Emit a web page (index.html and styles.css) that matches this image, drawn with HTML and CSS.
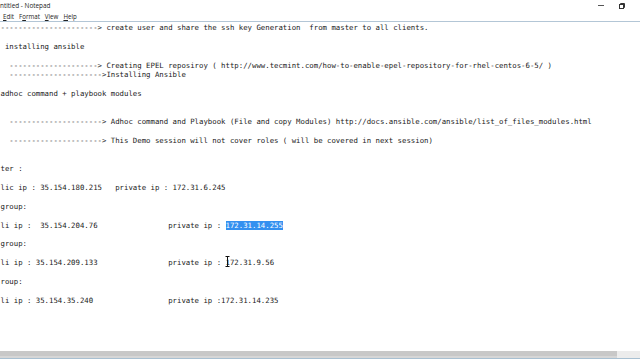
FILE: index.html
```html
<!DOCTYPE html>
<html lang="en">
<head>
    <meta charset="UTF-8">
    <title>Untitled - Notepad</title>
    <link rel="stylesheet" href="styles.css">
</head>
<body>
    <div class="window">
        <div class="titlebar">
            <span class="title">ntitled - Notepad</span>
            <div class="controls">
                <span class="btn-min"></span>
                <svg class="btn-restore" width="6" height="6" viewBox="0 0 6 6">
                    <rect x="0.5" y="1.5" width="4" height="4" fill="none" stroke="#333" stroke-width="1"/>
                    <path d="M1.5 1.5 V0.5 H5.5 V4.5 H4.5" fill="none" stroke="#333" stroke-width="1"/>
                </svg>
            </div>
        </div>
        <div class="menubar">
            <span class="menu-item"><u>E</u>dit</span>
            <span class="menu-item">F<u>o</u>rmat</span>
            <span class="menu-item"><u>V</u>iew</span>
            <span class="menu-item"><u>H</u>elp</span>
        </div>
        <pre class="editor">----------------------&gt; create user and share the ssh key Generation  from master to all clients.

 installing ansible

  --------------------&gt; Creating EPEL reposiroy ( http://www.tecmint.com/how-to-enable-epel-repository-for-rhel-centos-6-5/ )
  ---------------------&gt;Installing Ansible

adhoc command + playbook modules


  ---------------------&gt; Adhoc command and Playbook (File and copy Modules) http://docs.ansible.com/ansible/list_of_files_modules.html

  ---------------------&gt; This Demo session will not cover roles ( will be covered in next session)


ter :

lic ip : 35.154.180.215   private ip : 172.31.6.245

group:

li ip :  35.154.204.76                private ip : <span class="sel">172.31.14.255</span>

group:

li ip : 35.154.209.133                private ip : <span class="ibeam-at">1<svg class="ibeam" width="5" height="11" viewBox="0 0 5 11"><path d="M0.5 0.5 H4.5 M2.5 0.5 V10.5 M0.5 10.5 H4.5" stroke="#111" stroke-width="1" fill="none"/></svg></span>72.31.9.56

roup:

li ip : 35.154.35.240                 private ip :172.31.14.235</pre>
        <div class="hscroll"><div class="thumb"></div></div>
    </div>
</body>
</html>
```

FILE: styles.css
```css
html, body {
    margin: 0;
    background: #fff;
}
.window {
    width: 640px;
    height: 360px;
    display: flex;
    flex-direction: column;
    overflow: hidden;
    background: #fff;
}
.titlebar {
    height: 11px;
    display: flex;
    align-items: center;
    justify-content: space-between;
    font-family: "Open Sans", "Noto Sans", sans-serif;
    font-size: 6.4px;
    color: #222;
}
.controls {
    display: flex;
    align-items: center;
    gap: 15px;
    margin-right: 15px;
}
.btn-min {
    width: 6px;
    height: 1px;
    background: #555;
}
.btn-restore { display: block; }
.menubar {
    height: 10px;
    display: flex;
    align-items: center;
    gap: 5px;
    padding-left: 3px;
    font-family: "Open Sans", "Noto Sans", sans-serif;
    font-size: 6.2px;
    color: #222;
    border-bottom: 1px solid #b3c6d6;
}
.menu-item u { text-decoration-thickness: 0.5px; text-underline-offset: 1px; }
.editor {
    flex: 1;
    margin: 0;
    padding: 1px 0 0 0.5px;
    font-family: "DejaVu Sans Mono", "Liberation Mono", monospace;
    font-size: 7.33px;
    line-height: 9.4px;
    color: #1a1a1a;
    white-space: pre;
    overflow: hidden;
}
.sel {
    background: #3390f0;
    color: #fff;
}
.ibeam-at { position: relative; }
.ibeam {
    position: absolute;
    left: -1px;
    top: -2px;
}
.hscroll {
    height: 7px;
    background: #ececec;
    border-bottom: 1px solid #a8c0d2;
    margin-bottom: 1px;
}
.thumb {
    width: 617px;
    height: 5px;
    background: #c8c8c8;
    border-bottom: 2px solid #d6d6d6;
}
```
